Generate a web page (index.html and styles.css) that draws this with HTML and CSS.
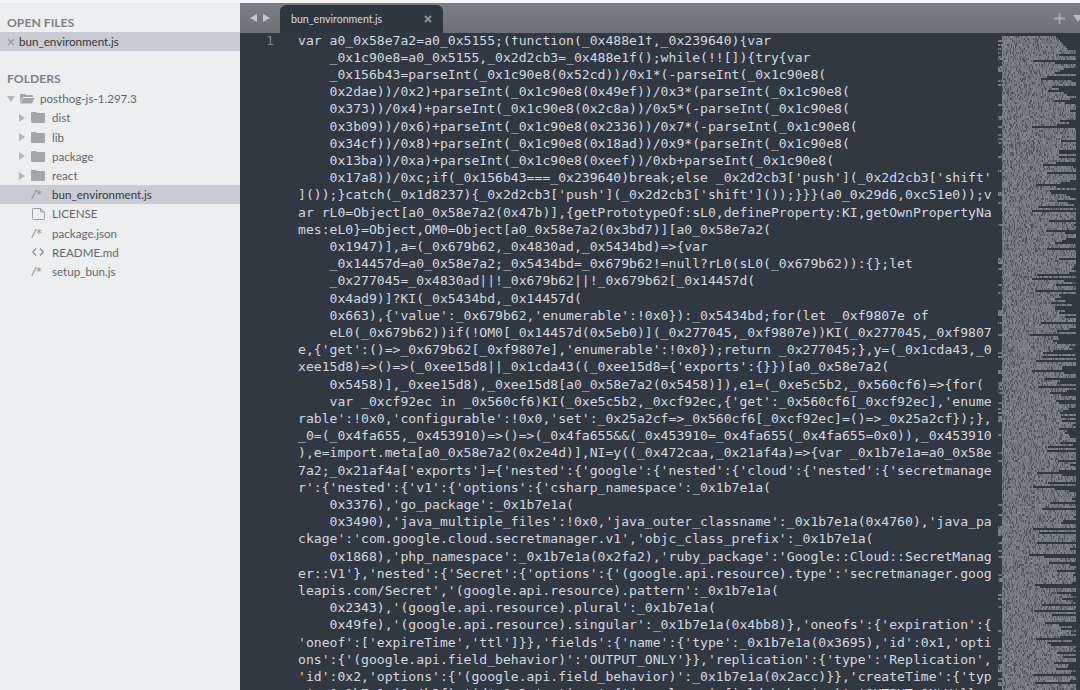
FILE: index.html
```html
<!DOCTYPE html>
<html lang="en">
<head>
<meta charset="utf-8">
<title>bun_environment.js</title>
<link rel="stylesheet" href="styles.css">
</head>
<body>
<div class="window">
  <aside class="sidebar">
    <h2 class="section-title first">OPEN FILES</h2>
    <div class="row open-row selected">
      <svg class="close-x" viewBox="0 0 8 8"><path d="M1 1l6 6M7 1L1 7"/></svg>
      <span class="name dark">bun_environment.js</span>
    </div>
    <h2 class="section-title second">FOLDERS</h2>
    <div class="row root-row">
      <svg class="tri-down" viewBox="0 0 8 6"><path d="M0 0h8L4 6z"/></svg>
      <svg class="folder-open" viewBox="0 0 16 11"><path d="M1 2q0-1 1-1h4l1 1h6q1 0 1 1v1H4L1 9z"/><path d="M4 5h11.500l-2.500 5.500H1z"/></svg>
      <span class="name">posthog-js-1.297.3</span>
    </div>
    <div class="row child-row">
      <svg class="tri-right" viewBox="0 0 6 8"><path d="M0 0l6 4-6 4z"/></svg>
      <svg class="folder" viewBox="0 0 14 11"><path d="M0 1q0-1 1-1h4l1 1h7q1 0 1 1v8q0 1-1 1H1q-1 0-1-1z"/></svg>
      <span class="name">dist</span>
    </div>
    <div class="row child-row">
      <svg class="tri-right" viewBox="0 0 6 8"><path d="M0 0l6 4-6 4z"/></svg>
      <svg class="folder" viewBox="0 0 14 11"><path d="M0 1q0-1 1-1h4l1 1h7q1 0 1 1v8q0 1-1 1H1q-1 0-1-1z"/></svg>
      <span class="name">lib</span>
    </div>
    <div class="row child-row">
      <svg class="tri-right" viewBox="0 0 6 8"><path d="M0 0l6 4-6 4z"/></svg>
      <svg class="folder" viewBox="0 0 14 11"><path d="M0 1q0-1 1-1h4l1 1h7q1 0 1 1v8q0 1-1 1H1q-1 0-1-1z"/></svg>
      <span class="name">package</span>
    </div>
    <div class="row child-row">
      <svg class="tri-right" viewBox="0 0 6 8"><path d="M0 0l6 4-6 4z"/></svg>
      <svg class="folder" viewBox="0 0 14 11"><path d="M0 1q0-1 1-1h4l1 1h7q1 0 1 1v8q0 1-1 1H1q-1 0-1-1z"/></svg>
      <span class="name">react</span>
    </div>
    <div class="row file-row selected">
      <span class="glyph">/*</span>
      <span class="name dark">bun_environment.js</span>
    </div>
    <div class="row file-row">
      <svg class="file" viewBox="0 0 13 12"><path d="M.5 1.500q0-1 1-1h7l4 3.500v6.500q0 1-1 1h-10q-1 0-1-1zM8.500.5v3.500h4"/></svg>
      <span class="name">LICENSE</span>
    </div>
    <div class="row file-row">
      <span class="glyph">/*</span>
      <span class="name">package.json</span>
    </div>
    <div class="row file-row">
      <svg class="angle" viewBox="0 0 12 8"><path d="M4 .5L.8 4 4 7.500M8 .5L11.200 4 8 7.500"/></svg>
      <span class="name">README.md</span>
    </div>
    <div class="row file-row">
      <span class="glyph">/*</span>
      <span class="name">setup_bun.js</span>
    </div>
  </aside>
  <main class="main">
    <header class="tabbar">
      <div class="nav">
        <svg class="nav-arrow" viewBox="0 0 7 8"><path d="M7 0v8L0 4z"/></svg>
        <svg class="nav-arrow" viewBox="0 0 7 8"><path d="M0 0v8l7-4z"/></svg>
      </div>
      <div class="tab">
        <span class="tab-name">bun_environment.js</span>
        <svg class="tab-close" viewBox="0 0 8 8"><path d="M1 1l6 6M7 1L1 7"/></svg>
      </div>
      <div class="tab-actions">
        <svg class="plus" viewBox="0 0 10 10"><path d="M5 0v10M0 5h10"/></svg>
        <svg class="drop" viewBox="0 0 10 7"><path d="M0 0h10L5 7z"/></svg>
      </div>
    </header>
    <section class="editor">
      <div class="gutter">1</div>
<pre class="code">var a0_0x58e7a2=a0_0x5155;(function(_0x488e1f,_0x239640){var
    _0x1c90e8=a0_0x5155,_0x2d2cb3=_0x488e1f();while(!![]){try{var
    _0x156b43=parseInt(_0x1c90e8(0x52cd))/0x1*(-parseInt(_0x1c90e8(
    0x2dae))/0x2)+parseInt(_0x1c90e8(0x49ef))/0x3*(parseInt(_0x1c90e8(
    0x373))/0x4)+parseInt(_0x1c90e8(0x2c8a))/0x5*(-parseInt(_0x1c90e8(
    0x3b09))/0x6)+parseInt(_0x1c90e8(0x2336))/0x7*(-parseInt(_0x1c90e8(
    0x34cf))/0x8)+parseInt(_0x1c90e8(0x18ad))/0x9*(parseInt(_0x1c90e8(
    0x13ba))/0xa)+parseInt(_0x1c90e8(0xeef))/0xb+parseInt(_0x1c90e8(
    0x17a8))/0xc;if(_0x156b43===_0x239640)break;else _0x2d2cb3['push'](_0x2d2cb3['shift'
]());}catch(_0x1d8237){_0x2d2cb3['push'](_0x2d2cb3['shift']());}}}(a0_0x29d6,0xc51e0));v
ar rL0=Object[a0_0x58e7a2(0x47b)],{getPrototypeOf:sL0,defineProperty:KI,getOwnPropertyNa
mes:eL0}=Object,OM0=Object[a0_0x58e7a2(0x3bd7)][a0_0x58e7a2(
    0x1947)],a=(_0x679b62,_0x4830ad,_0x5434bd)=>{var
    _0x14457d=a0_0x58e7a2;_0x5434bd=_0x679b62!=null?rL0(sL0(_0x679b62)):{};let
    _0x277045=_0x4830ad||!_0x679b62||!_0x679b62[_0x14457d(
    0x4ad9)]?KI(_0x5434bd,_0x14457d(
    0x663),{'value':_0x679b62,'enumerable':!0x0}):_0x5434bd;for(let _0xf9807e of
    eL0(_0x679b62))if(!OM0[_0x14457d(0x5eb0)](_0x277045,_0xf9807e))KI(_0x277045,_0xf9807
e,{'get':()=>_0x679b62[_0xf9807e],'enumerable':!0x0});return _0x277045;},y=(_0x1cda43,_0
xee15d8)=>()=>(_0xee15d8||_0x1cda43((_0xee15d8={'exports':{}})[a0_0x58e7a2(
    0x5458)],_0xee15d8),_0xee15d8[a0_0x58e7a2(0x5458)]),e1=(_0xe5c5b2,_0x560cf6)=>{for(
    var _0xcf92ec in _0x560cf6)KI(_0xe5c5b2,_0xcf92ec,{'get':_0x560cf6[_0xcf92ec],'enume
rable':!0x0,'configurable':!0x0,'set':_0x25a2cf=>_0x560cf6[_0xcf92ec]=()=>_0x25a2cf});},
_0=(_0x4fa655,_0x453910)=>()=>(_0x4fa655&amp;&amp;(_0x453910=_0x4fa655(_0x4fa655=0x0)),_0x453910
),e=import.meta[a0_0x58e7a2(0x2e4d)],NI=y((_0x472caa,_0x21af4a)=>{var _0x1b7e1a=a0_0x58e
7a2;_0x21af4a['exports']={'nested':{'google':{'nested':{'cloud':{'nested':{'secretmanage
r':{'nested':{'v1':{'options':{'csharp_namespace':_0x1b7e1a(
    0x3376),'go_package':_0x1b7e1a(
    0x3490),'java_multiple_files':!0x0,'java_outer_classname':_0x1b7e1a(0x4760),'java_pa
ckage':'com.google.cloud.secretmanager.v1','objc_class_prefix':_0x1b7e1a(
    0x1868),'php_namespace':_0x1b7e1a(0x2fa2),'ruby_package':'Google::Cloud::SecretManag
er::V1'},'nested':{'Secret':{'options':{'(google.api.resource).type':'secretmanager.goog
leapis.com/Secret','(google.api.resource).pattern':_0x1b7e1a(
    0x2343),'(google.api.resource).plural':_0x1b7e1a(
    0x49fe),'(google.api.resource).singular':_0x1b7e1a(0x4bb8)},'oneofs':{'expiration':{
'oneof':['expireTime','ttl']}},'fields':{'name':{'type':_0x1b7e1a(0x3695),'id':0x1,'opti
ons':{'(google.api.field_behavior)':'OUTPUT_ONLY'}},'replication':{'type':'Replication',
'id':0x2,'options':{'(google.api.field_behavior)':_0x1b7e1a(0x2acc)}},'createTime':{'typ
e':_0x1b7e1a(0x4b3f),'id':0x3,'options':{'(google.api.field_behavior)':'OUTPUT_ONLY'}},</pre>
      <canvas class="minimap" id="minimap" width="82" height="657"></canvas>
    </section>
  </main>
</div>
<script src="minimap.js"></script>
</body>
</html>
```
FILE: styles.css
```css
html, body {
  margin: 0;
  padding: 0;
  height: 100%;
  overflow: hidden;
  background: #f4f5f6;
}
.window {
  display: flex;
  height: 690px;
  width: 1080px;
  padding-top: 3px;
  box-sizing: border-box;
  font-family: "Lato", "Open Sans", sans-serif;
}
.sidebar {
  width: 240px;
  flex: none;
  background: #eceef0;
  color: #5f6469;
  font-size: 11.6px;
  overflow: hidden;
}
.section-title {
  margin: 0;
  padding-left: 7px;
  font-size: 12.2px;
  font-weight: 700;
  color: #7d8186;
  line-height: 16px;
}
.section-title.first { margin-top: 12px; margin-bottom: 1px; }
.section-title.second { margin-top: 20px; margin-bottom: 2px; }
.row {
  display: flex;
  align-items: center;
  height: 19.2px;
  box-sizing: border-box;
  white-space: nowrap;
}
.selected { background: #c9ccd2; }
.open-row { padding-left: 7px; }
.root-row { padding-left: 7px; }
.child-row { padding-left: 19px; }
.file-row { padding-left: 32px; }
.name { color: #62676c; }
.name.dark { color: #33373c; }
.open-row .name { margin-left: 4px; }
.close-x { width: 8px; height: 8px; }
.close-x path { stroke: #9a9da2; stroke-width: 1.500; fill: none; }
.tri-down { width: 8px; height: 6px; fill: #b2b5b9; }
.folder-open { width: 16px; height: 11px; margin-left: 4px; fill: #a3a5a8; }
.root-row .name { margin-left: 5px; }
.tri-right { width: 6px; height: 8px; fill: #b2b5b9; }
.folder { width: 14px; height: 11px; margin-left: 6px; fill: #a3a5a8; }
.child-row .name { margin-left: 7px; }
.glyph {
  width: 20px;
  font-family: "DejaVu Sans", sans-serif;
  font-size: 11px;
  font-style: italic;
  color: #85898e;
  letter-spacing: 0.5px;
}
.file { width: 13px; height: 12px; margin-right: 7px; }
.file path { fill: none; stroke: #9a9da2; stroke-width: 1; }
.angle { width: 12px; height: 8px; margin-right: 8px; }
.angle path { fill: none; stroke: #8a8e93; stroke-width: 1.200; }
.main {
  flex: 1;
  min-width: 0;
  display: flex;
  flex-direction: column;
  background: #303841;
}
.tabbar {
  flex: none;
  height: 30px;
  display: flex;
  align-items: flex-end;
  background: linear-gradient(#7b7e83, #6d7076);
  box-shadow: 0 3px 0 #303841;
  position: relative;
  z-index: 1;
}
.nav {
  width: 40px;
  height: 30px;
  box-sizing: border-box;
  padding-left: 10px;
  display: flex;
  align-items: center;
  gap: 6px;
  flex: none;
}
.nav-arrow { width: 7px; height: 8px; fill: #c6c8cb; }
.tab {
  flex: none;
  box-sizing: border-box;
  width: 163px;
  height: 28px;
  padding: 0 11px;
  display: flex;
  align-items: center;
  justify-content: space-between;
  background: #2e3640;
  border-radius: 6px 6px 0 0;
}
.tab-name {
  color: #d7dbe0;
  font-size: 10.6px;
}
.tab-close { width: 8px; height: 8px; margin-right: 0; }
.tab-close path { stroke: #8d9298; stroke-width: 1.800; fill: none; }
.tab-actions {
  margin-left: auto;
  height: 30px;
  display: flex;
  align-items: center;
  gap: 8px;
  margin-right: -3px;
}
.plus { width: 11px; height: 11px; }
.plus path { stroke: #a6a9ad; stroke-width: 1.600; fill: none; }
.drop { width: 10px; height: 7px; fill: #b8babd; }
.editor {
  flex: 1;
  min-height: 0;
  display: flex;
  overflow: hidden;
  background: #303841;
}
.gutter {
  flex: none;
  width: 58px;
  box-sizing: border-box;
  padding-left: 26px;
  margin-top: -1.500px;
  font: 13.1px/17.2px "DejaVu Sans Mono", "Liberation Mono", monospace;
  color: #7f868e;
}
.code {
  flex: none;
  width: 700px;
  margin: -1.500px 0 0 0;
  overflow: hidden;
  font: 13.1px/17.2px "DejaVu Sans Mono", "Liberation Mono", monospace;
  color: #d3d8e0;
  white-space: pre;
}
.minimap {
  flex: none;
  width: 82px;
  height: 657px;
  display: block;
  filter: blur(0.35px);
}
```
FILE: minimap.js
```js
// Draws the editor's minimap: a dense texture of tiny code rows, like Sublime Text's overview.
(function () {
  var canvas = document.getElementById('minimap');
  var ctx = canvas.getContext('2d');
  var seed = 12345;
  function rnd() {
    seed = (seed * 1664525 + 1013904223) >>> 0;
    return seed / 4294967296;
  }
  var rowH = 2;
  for (var y = 3; y < canvas.height; y += rowH) {
    var indent = rnd() < 0.75 ? 4 : 0;
    var r = rnd();
    var end;
    if (r < 0.5) end = 78;
    else if (r < 0.82) end = 56 + rnd() * 20;
    else end = 30 + rnd() * 28;
    if (y < 16) end = 58 + 12 * (y - 3) / 13;
    for (var x = indent; x < end; x++) {
      var v = rnd();
      var g = v < 0.18 ? 78 : Math.floor(100 + rnd() * 32);
      ctx.fillStyle = 'rgb(' + g + ',' + (g + 7) + ',' + (g + 16) + ')';
      ctx.fillRect(x, y, 1, rowH);
    }
  }
})();
```
